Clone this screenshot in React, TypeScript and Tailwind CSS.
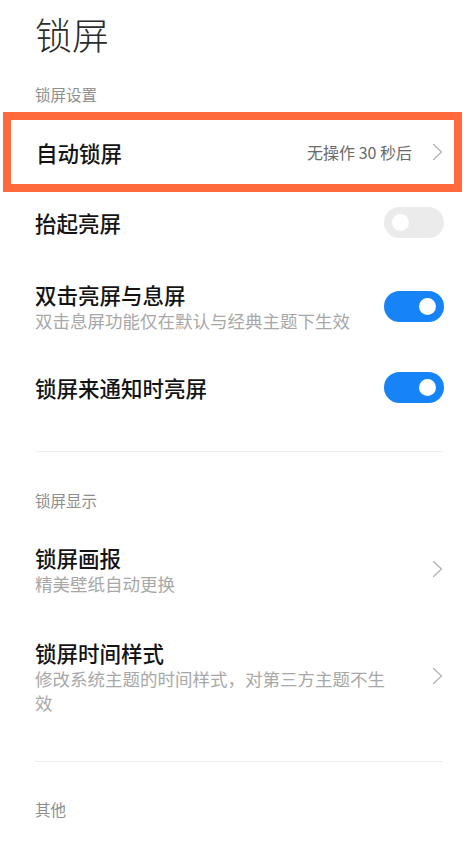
import React from "react";

const FONT = { fontFamily: '"Noto Sans CJK SC", "Noto Sans", sans-serif' };

function Chevron() {
  return (
    <svg width="11" height="18" viewBox="0 0 11 18" fill="none" className="shrink-0">
      <path d="M1.5 1.5 L9.5 9 L1.5 16.5" stroke="#b5b5b5" strokeWidth="1.4" strokeLinecap="round" strokeLinejoin="round" />
    </svg>
  );
}

function Toggle({ on }: { on: boolean }) {
  return (
    <div
      className={`flex h-[31px] w-[60px] shrink-0 items-center rounded-full px-[8px] ${
        on ? "justify-end bg-[#1683f6]" : "justify-start bg-[#ebebeb]"
      }`}
    >
      <div className="h-[17px] w-[17px] rounded-full bg-white" />
    </div>
  );
}

function Header({ children, pt }: { children: React.ReactNode; pt: string }) {
  return (
    <div className={`pl-[35px] text-[15.5px] leading-[21px] text-[#8e8e8e] ${pt}`}>{children}</div>
  );
}

function Title({ children }: { children: React.ReactNode }) {
  return <div className="text-[21.5px] font-medium leading-[29px] text-[#141414]">{children}</div>;
}

function Sub({ children }: { children: React.ReactNode }) {
  return <div className="text-[17.5px] leading-[23.5px] text-[#a8a8a8]">{children}</div>;
}

export default function App() {
  return (
    <div className="min-h-[843px] w-full bg-white" style={FONT}>
      <div className="pl-[35px] pt-[12px] text-[37px] font-light leading-[44px] text-[#2c2c2c]">锁屏</div>

      <Header pt="pt-[28px] pb-[7px]">锁屏设置</Header>

      <div className="ml-[3px] flex h-[80px] w-[459px] items-center border-[8px] border-[#fe6a3c] pl-[25px] pr-[11px]">
        <Title>自动锁屏</Title>
        <div className="ml-auto mr-[20px] text-[16px] text-[#6a6a6a]">无操作 30 秒后</div>
        <Chevron />
      </div>

      <div className="flex h-[60px] items-center pl-[35px] pr-[30px]">
        <Title>抬起亮屏</Title>
        <div className="ml-auto">
          <Toggle on={false} />
        </div>
      </div>

      <div className="flex items-center py-[28px] pl-[35px] pr-[30px]">
        <div className="flex-1">
          <Title>双击亮屏与息屏</Title>
          <Sub>双击息屏功能仅在默认与经典主题下生效</Sub>
        </div>
        <Toggle on />
      </div>

      <div className="flex h-[54px] items-center pl-[35px] pr-[30px]">
        <Title>锁屏来通知时亮屏</Title>
        <div className="ml-auto">
          <Toggle on />
        </div>
      </div>

      <div className="ml-[35px] mr-[31px] mt-[36px] h-px bg-[#ededed]" />

      <Header pt="pt-[38px] pb-[11px]">锁屏显示</Header>

      <div className="flex items-center py-[21px] pl-[35px] pr-[31px]">
        <div className="flex-1">
          <Title>锁屏画报</Title>
          <Sub>精美壁纸自动更换</Sub>
        </div>
        <Chevron />
      </div>

      <div className="flex items-center pb-[47px] pl-[35px] pr-[31px] pt-[22px]">
        <div className="mr-[40px] flex-1">
          <Title>锁屏时间样式</Title>
          <Sub>修改系统主题的时间样式，对第三方主题不生效</Sub>
        </div>
        <Chevron />
      </div>

      <div className="ml-[35px] mr-[31px] h-px bg-[#ededed]" />

      <Header pt="pt-[37px]">其他</Header>
    </div>
  );
}
